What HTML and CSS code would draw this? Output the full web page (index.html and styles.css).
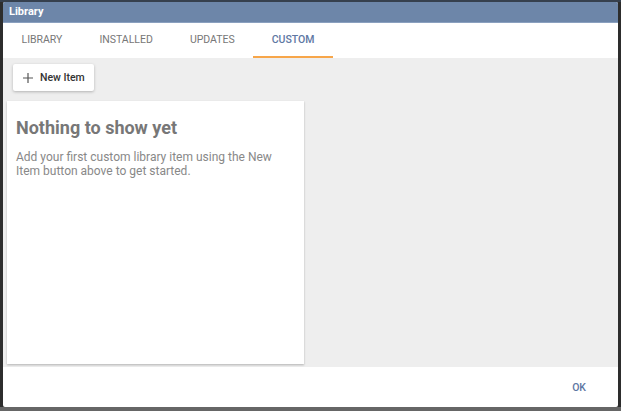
FILE: index.html
```html
<!DOCTYPE html>
<html lang="en">
<head>
    <meta charset="UTF-8">
    <meta name="viewport" content="width=device-width, initial-scale=1.0">
    <title>Library</title>
    <link rel="stylesheet" href="styles.css">
</head>
<body>

    <div class="dialog">
        <div class="dialog-title">Library</div>

        <div class="tabs">
            <div class="tab">Library</div>
            <div class="tab">Installed</div>
            <div class="tab">Updates</div>
            <div class="tab active">Custom</div>
        </div>

        <div class="content">
            <div class="toolbar">
                <button class="new-item">
                    <svg width="12" height="12" viewBox="0 0 12 12">
                        <path d="M6 1v10M1 6h10" stroke="#555" stroke-width="1.2" fill="none"/>
                    </svg>
                    New Item
                </button>
            </div>

            <div class="card">
                <h2>Nothing to show yet</h2>
                <p>Add your first custom library item using the New Item button above to get started.</p>
            </div>
        </div>

        <div class="dialog-footer">
            <button class="ok">OK</button>
        </div>
    </div>

</body>
</html>
```

FILE: styles.css
```css
body {
    margin: 0;
    padding: 2px 3px 4px 3px;
    height: 411px;
    box-sizing: border-box;
    font-family: Roboto, "Liberation Sans", sans-serif;
    background: linear-gradient(to bottom, #36404e 0, #36404e 2px, #2d2d2d 2px, #2d2d2d 407px, #666 407px);
    overflow: hidden;
}
.dialog {
    height: 405px;
    display: flex;
    flex-direction: column;
    background-color: #fff;
    border-radius: 2px;
    overflow: hidden;
}
.dialog-title {
    height: 20px;
    line-height: 20px;
    padding-left: 6px;
    background-color: #6d86a9;
    border-bottom: 1px solid #8aa0bf;
    color: #fff;
    font-size: 11px;
    font-weight: bold;
}
.tabs {
    display: flex;
    height: 35px;
    background-color: #fff;
}
.tab {
    padding: 0 18.5px;
    box-sizing: border-box;
    text-align: center;
    line-height: 34px;
    font-size: 10.5px;
    text-transform: uppercase;
    color: #777;
}
.tab.active {
    color: #5e77a3;
    font-weight: 500;
    border-bottom: 2px solid #f7a64a;
}
.content {
    flex: 1;
    background-color: #eee;
    padding: 6px 4px 3px 4px;
}
.toolbar {
    padding-left: 6px;
    height: 37px;
}
.new-item {
    display: flex;
    align-items: center;
    gap: 6px;
    height: 27px;
    padding: 0 9px 0 9px;
    background-color: #fff;
    border: none;
    border-radius: 2px;
    box-shadow: 0 1px 3px rgba(0, 0, 0, 0.25);
    font-family: Roboto, "Liberation Sans", sans-serif;
    font-size: 10.5px;
    font-weight: 500;
    color: #333;
}
.card {
    width: 297px;
    height: 263px;
    box-sizing: border-box;
    background-color: #fff;
    box-shadow: 0 1px 2px rgba(0, 0, 0, 0.25);
    padding: 16px 9px;
}
.card h2 {
    margin: 0 0 12px 0;
    font-size: 18px;
    font-weight: bold;
    color: #777;
}
.card p {
    margin: 0;
    font-size: 12px;
    line-height: 14px;
    color: #888;
}
.dialog-footer {
    height: 40px;
    display: flex;
    justify-content: flex-end;
    align-items: center;
    padding-right: 32px;
}
.ok {
    background: none;
    border: none;
    font-family: Roboto, "Liberation Sans", sans-serif;
    font-size: 10.5px;
    font-weight: 500;
    color: #5e77a3;
    padding: 0;
}
```
